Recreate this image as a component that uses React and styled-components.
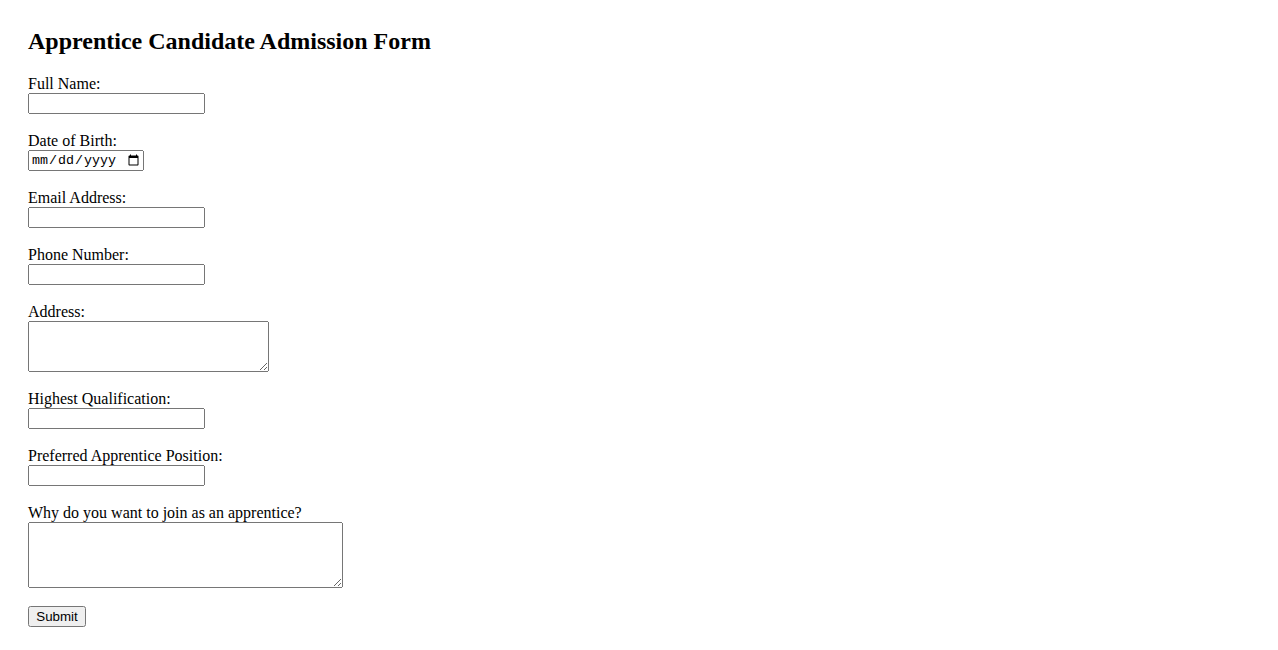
import React from 'react';
import styled, { createGlobalStyle } from 'styled-components';

const GlobalStyle = createGlobalStyle`
  body {
    margin: 0;
    background: #ffffff;
    color: #000000;
    font-family: 'Liberation Serif', 'Times New Roman', serif;
    font-size: 16px;
  }
`;

const Page = styled.div`
  padding: 28px 28px;
`;

const Title = styled.h2`
  margin: 0 0 18px;
  font-size: 24px;
  font-weight: bold;
`;

const Form = styled.form`
  display: flex;
  flex-direction: column;
  align-items: flex-start;
`;

const Field = styled.div`
  display: flex;
  flex-direction: column;
  align-items: flex-start;
  margin-bottom: 16px;
`;

const Label = styled.label`
  display: block;
  line-height: 18px;
  margin-top: 2px;
`;

const TextInput = styled.input`
  box-sizing: border-box;
  width: 177px;
  height: 21px;
  margin: 0;
  font-family: 'Liberation Sans', Arial, sans-serif;
  font-size: 13.33px;
`;

const DateInput = styled.input`
  box-sizing: border-box;
  width: 116px;
  height: 21px;
  margin: 0;
  font-family: 'Liberation Mono', 'DejaVu Sans Mono', monospace;
  font-size: 13.33px;
`;

const TextArea = styled.textarea`
  box-sizing: border-box;
  width: ${(p) => p.$width}px;
  height: ${(p) => p.$height}px;
  margin: 0;
  font-family: 'Liberation Mono', monospace;
  font-size: 13.33px;
`;

const SubmitButton = styled.button`
  box-sizing: border-box;
  width: 58px;
  height: 21px;
  margin: 2px 0 0;
  padding: 1px 6px;
  font-family: 'Liberation Sans', Arial, sans-serif;
  font-size: 13.33px;
`;

const fields = [
  { id: 'fullName', label: 'Full Name:', kind: 'text' },
  { id: 'dob', label: 'Date of Birth:', kind: 'date' },
  { id: 'email', label: 'Email Address:', kind: 'email' },
  { id: 'phone', label: 'Phone Number:', kind: 'tel' },
  { id: 'address', label: 'Address:', kind: 'area', w: 241, h: 51 },
  { id: 'qualification', label: 'Highest Qualification:', kind: 'text' },
  { id: 'position', label: 'Preferred Apprentice Position:', kind: 'text' },
  { id: 'reason', label: 'Why do you want to join as an apprentice?', kind: 'area', w: 315, h: 66 },
];

const App = () => {
  return (
    <Page>
      <GlobalStyle />
      <Title>Apprentice Candidate Admission Form</Title>
      <Form onSubmit={(e) => e.preventDefault()}>
        {fields.map((f) => (
          <Field key={f.id}>
            <Label htmlFor={f.id}>{f.label}</Label>
            {f.kind === 'area' && <TextArea id={f.id} $width={f.w} $height={f.h} />}
            {f.kind === 'date' && <DateInput id={f.id} type="date" />}
            {f.kind !== 'area' && f.kind !== 'date' && <TextInput id={f.id} type={f.kind} />}
          </Field>
        ))}
        <SubmitButton type="submit">Submit</SubmitButton>
      </Form>
    </Page>
  );
};

export default App;
